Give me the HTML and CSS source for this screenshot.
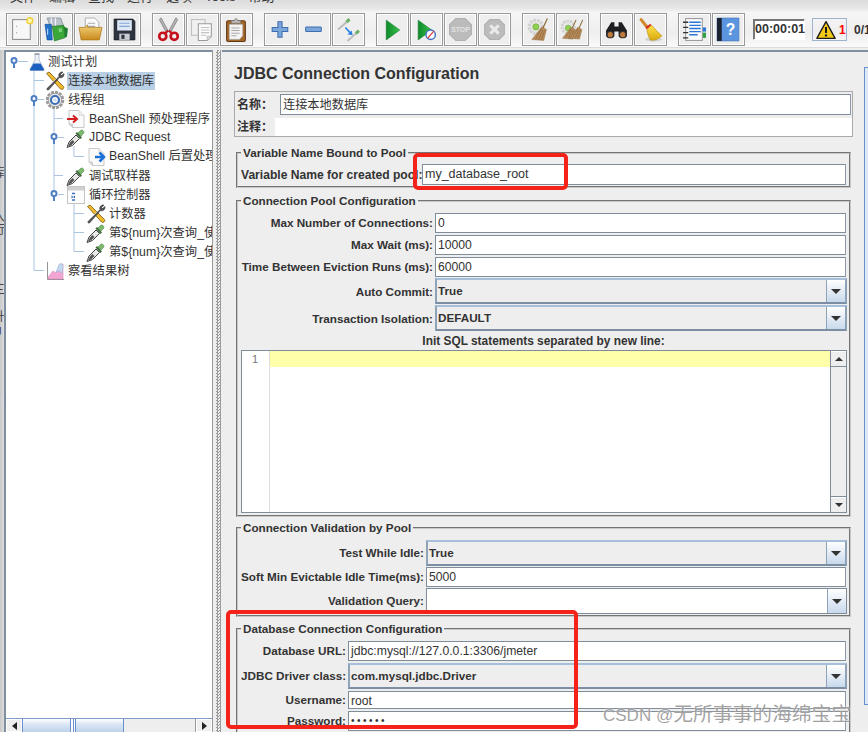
FILE: index.html
```html
<!DOCTYPE html>
<html lang="zh">
<head>
<meta charset="utf-8">
<title>JDBC Connection Configuration</title>
<link rel="stylesheet" href="styles.css">
</head>
<body>
<svg class="defs" aria-hidden="true">
  <defs>
    <linearGradient id="gGreen" x1="0" y1="0" x2="1" y2="0"><stop offset="0" stop-color="#0d8a2a"/><stop offset="1" stop-color="#39c24a"/></linearGradient>
    <linearGradient id="gFolder" x1="0" y1="0" x2="0" y2="1"><stop offset="0" stop-color="#f4d27a"/><stop offset="1" stop-color="#c98a1c"/></linearGradient>
    <linearGradient id="gBroom" x1="0" y1="0" x2="0" y2="1"><stop offset="0" stop-color="#ffe14a"/><stop offset="1" stop-color="#d9a90f"/></linearGradient>

    <symbol id="dropper" viewBox="0 0 20 20">
      <path d="M1 19.500 3 14 10 7 13.500 10.500 6.500 17.500Z" fill="#e8e8e8" stroke="#444" stroke-width="1"/>
      <path d="M2 18.500 4 14.500 6.500 12 8.500 14 5 17.500Z" fill="#555"/>
      <path d="M9.500 5.500 14.500 11 16 9.500 11 4Z" fill="#3f6b3f"/>
      <path d="M12 5 14.500 2.500C16 1 19 3.500 17.500 5.500L15 8Z" fill="#7cb96a" stroke="#4e8a48" stroke-width=".6"/>
    </symbol>
    <symbol id="tools" viewBox="0 0 20 20">
      <path d="M1.500 2.500 4 1 18.500 15.500C19.500 17 17.500 19.500 15.500 18Z" fill="#f0b92e" stroke="#7a5a10" stroke-width=".8"/>
      <path d="M2 17.500 14 5.500C13 3 15 .5 18 1L15.500 3.500 16.500 4.500 19 2.500C19.500 5.500 17 7.500 14.500 6.500L3.500 19C2.500 19.500 1.500 18.500 2 17.500Z" fill="#555" stroke="#222" stroke-width=".5"/>
      <path d="M5 14 12 7" stroke="#ccc" stroke-width=".9"/>
    </symbol>
    <symbol id="gear" viewBox="0 0 20 20">
      <circle cx="10" cy="10" r="7.500" fill="none" stroke="#999" stroke-width="3.500" stroke-dasharray="2.900 1"/>
      <circle cx="10" cy="10" r="6.800" fill="#e4e4e4" stroke="#8a8a8a" stroke-width=".7"/>
      <circle cx="10" cy="10" r="4" fill="#fff" stroke="#3c6fb5" stroke-width="2.200"/>
      <circle cx="10" cy="10" r="1.800" fill="#cfdcee"/>
    </symbol>
    <symbol id="flask" viewBox="0 0 18 18">
      <path d="M7 1h4v6l5 9c.4 1-.2 1.500-1 1.500H3c-.8 0-1.400-.5-1-1.500l5-9Z" fill="#eef2f7" stroke="#9ab" stroke-width=".7"/>
      <path d="M5.500 10.500h7L16 16.500c.2.700-.3 1-1 1H3c-.7 0-1.200-.3-1-1Z" fill="#1d5fc0"/>
      <path d="M6.500 1h5" stroke="#778" stroke-width="1"/>
    </symbol>
    <symbol id="paper" viewBox="0 0 20 20">
      <path d="M3 1.500h10l5 5v12H6.500L3 15Z" fill="#fbfbfb" stroke="#bbb" stroke-width=".8"/>
      <path d="M3 15h3.500v3.500Z" fill="#ddd" stroke="#bbb" stroke-width=".6"/>
      <path d="M13 1.500v5h5" fill="#eee" stroke="#ccc" stroke-width=".6"/>
    </symbol>
    <symbol id="loop" viewBox="0 0 20 20">
      <rect x="1.500" y="1.500" width="17" height="17" fill="#fcfcfc" stroke="#c4c4c4"/>
      <rect x="2" y="2" width="16" height="3.500" fill="#d0d0d0"/>
      <path d="M6 8.500h3M6 15h3" stroke="#3c6fb5" stroke-width="1.300"/>
      <path d="M5.500 10.500l2 1.500-2 1.500ZM9 10.500l-2 1.500 2 1.500Z" fill="#3c6fb5"/>
    </symbol>
    <symbol id="chart" viewBox="0 0 20 20">
      <path d="M2.500 1v17.500H19" fill="none" stroke="#888" stroke-width=".9"/>
      <path d="M3 18V16L8 10l3 2 4-9h3v15Z" fill="#f3a6d3" stroke="#d878b8" stroke-width=".5"/>
      <path d="M11 11.500 14 3.500c2-1.500 4-.5 4 2l-1 7-3-3Z" fill="#c4d8ef" stroke="#8fb0d8" stroke-width=".5"/>
    </symbol>

    <symbol id="i-new" viewBox="0 0 24 24">
      <rect x="2.500" y="2.500" width="17" height="19" fill="#f7f7f7" stroke="#8c8c8c"/>
      <path d="M6 9h.8M6 15h.8" stroke="#999"/>
      <circle cx="19" cy="3.500" r="2.800" fill="#fff6b0" stroke="#f0cf3c" stroke-width="1.400"/>
    </symbol>
    <symbol id="i-books" viewBox="0 0 24 24">
      <path d="M3 1h13l3 8H6Z" fill="#b9c2c9" stroke="#7c8790" stroke-width=".7"/>
      <path d="M7 1v7M11 1v8" stroke="#eef" stroke-width="1.200"/>
      <path d="M1 7h6l1 15H3Z" fill="#1f71c9" stroke="#0e4a90" stroke-width=".6"/>
      <path d="M3.500 11v6" stroke="#bcdcff"/>
      <path d="M8 9l11-1 1 12-10 3Z" fill="#3ba83a" stroke="#1d6f20" stroke-width=".6"/>
      <path d="M19 9l4 2-1 8-2 1Z" fill="#1d7f2d"/>
      <path d="M14 11l3-.3.400 3.500-3 .4Z" fill="#7fd07a"/>
    </symbol>
    <symbol id="i-open" viewBox="0 0 24 24">
      <path d="M7 1h9l4 4v11H7Z" fill="#fafafa" stroke="#999" stroke-width=".7"/>
      <path d="M9.500 6h7M9.500 9h7M9.500 12h7" stroke="#aaa"/>
      <path d="M1 10h6l2-2.500 0 2.500h14l-2.500 12H3Z" fill="url(#gFolder)" stroke="#a87614" stroke-width=".7"/>
    </symbol>
    <symbol id="i-save" viewBox="0 0 24 24">
      <path d="M2 2h18l2 2v18H2Z" fill="#2e3340" stroke="#15171d" stroke-width=".7"/>
      <rect x="5" y="3" width="14" height="10" fill="#dfe9f6"/>
      <path d="M7 6h10M7 9h10" stroke="#7fa7d8"/>
      <rect x="7" y="16" width="10" height="6" fill="#c9ccd1"/>
      <rect x="9" y="17" width="3" height="4" fill="#2e3340"/>
    </symbol>
    <symbol id="i-cut" viewBox="0 0 24 24">
      <path d="M5 1 12 14 10 15 3.500 3C3.200 2 4 1 5 1ZM19 1 12 14 14 15 20.500 3C20.800 2 20 1 19 1Z" fill="#b5b5b5" stroke="#777" stroke-width=".7"/>
      <circle cx="6.500" cy="18.500" r="3.400" fill="none" stroke="#c5121c" stroke-width="2.600"/>
      <circle cx="17.500" cy="18.500" r="3.400" fill="none" stroke="#c5121c" stroke-width="2.600"/>
      <path d="M8.500 16 11.500 13M15.500 16 12.500 13" stroke="#c5121c" stroke-width="2"/>
    </symbol>
    <symbol id="i-copy" viewBox="0 0 24 24">
      <rect x="1.500" y="2.500" width="13" height="15" fill="#f1f1f1" stroke="#bdbdbd"/>
      <path d="M8 6.500h12.500v12l-4 4H8Z" fill="#fbfbfb" stroke="#9a9a9a"/>
      <path d="M10.500 10h8M10.500 12.500h8M10.500 15h8M10.500 17.500h5" stroke="#c3c3c3"/>
      <path d="M16.500 22.500v-4h4" fill="#ddd" stroke="#aaa" stroke-width=".7"/>
    </symbol>
    <symbol id="i-paste" viewBox="0 0 24 24">
      <rect x="2.500" y="3.500" width="18" height="20" rx="1.500" fill="#a5662a" stroke="#5f3a15"/>
      <path d="M5 7h13v11l-3 3.500H5Z" fill="#f4f4f4" stroke="#999" stroke-width=".5"/>
      <path d="M7 10.500h8M7 13h8M7 15.500h8M7 18h5" stroke="#a8a8a8"/>
      <path d="M7 6V3.500h3c0-2.500 3-2.500 3 0h3V6Z" fill="#bdbdbd" stroke="#777" stroke-width=".7"/>
    </symbol>
    <symbol id="i-plus" viewBox="0 0 24 24"><path d="M9.500 4.500h4v5.500h5.500v4H13.500v5.500h-4V14H4v-4h5.500Z" fill="#7aa6dc" stroke="#3d6fb0" stroke-width="1"/></symbol>
    <symbol id="i-minus" viewBox="0 0 24 24"><rect x="3.500" y="9.500" width="15" height="4.500" rx=".8" fill="#7aa6dc" stroke="#3d6fb0"/></symbol>
    <symbol id="i-toggle" viewBox="0 0 24 24">
      <path d="M2 12 10 5" stroke="#bbb" stroke-width="1.800"/><path d="M10 5 13 2" stroke="#6fb06a" stroke-width="3"/>
      <path d="M11 23 19 16" stroke="#bbb" stroke-width="1.800"/><path d="M19 16 22 13" stroke="#6fb06a" stroke-width="3"/>
      <path d="M9 10 13.500 15" stroke="#2a7fe0" stroke-width="1.500"/><path d="M16 17.500 11 16.500 15 13Z" fill="#2a7fe0"/>
    </symbol>
    <symbol id="i-play" viewBox="0 0 24 24"><path d="M6 3 19 12.500 6 22Z" fill="url(#gGreen)" stroke="#0d6d22" stroke-width=".5"/></symbol>
    <symbol id="i-play2" viewBox="0 0 24 24">
      <path d="M4 3 17 12.500 4 22Z" fill="url(#gGreen)" stroke="#0d6d22" stroke-width=".5"/>
      <circle cx="16" cy="17" r="4.500" fill="#fff" stroke="#3f74c8" stroke-width="1.400"/>
      <path d="M13 20.500 19 13.500" stroke="#d93a3a" stroke-width="1.200"/>
    </symbol>
    <symbol id="i-stop" viewBox="0 0 24 24">
      <path d="M7.500 1.500h9l6 6v9l-6 6h-9l-6-6v-9Z" fill="#bcbcbc" stroke="#b0b0b0"/>
      <text x="12" y="14.500" class="stop-text" text-anchor="middle">STOP</text>
    </symbol>
    <symbol id="i-down" viewBox="0 0 24 24">
      <path d="M7.500 2.500h9l5 5v9l-5 5h-9l-5-5v-9Z" fill="#bcbcbc" stroke="#b0b0b0"/>
      <path d="M8 8l8 8M16 8l-8 8" stroke="#e9e9e9" stroke-width="3"/>
    </symbol>
    <symbol id="broomstr" viewBox="0 0 24 24">
      <path d="M20 0 15 11" stroke="#8d6a3c" stroke-width="1.300"/>
      <path d="M14 9 19 12 16 24 3 23Z" fill="#b98d5c" stroke="#8d6a3c" stroke-width=".5"/>
      <path d="M13.500 11 7 23M15 12 10.500 23.500M17 13 13.500 23.500" stroke="#8a6338" stroke-width=".8"/>
    </symbol>
    <symbol id="i-clear" viewBox="0 0 24 24">
      <circle cx="9.500" cy="9.500" r="6.500" fill="#e7e7e7" stroke="#d2d2d2" stroke-width="3" stroke-dasharray="2.500 1"/>
      <circle cx="9.500" cy="9.500" r="3" fill="#8fd050" stroke="#6aa83a" stroke-width=".6"/>
      <use href="#broomstr" x="3" y="0" width="21" height="24"/>
    </symbol>
    <symbol id="i-clearall" viewBox="0 0 26 24">
      <circle cx="8.500" cy="9.500" r="6.500" fill="#e7e7e7" stroke="#d2d2d2" stroke-width="3" stroke-dasharray="2.500 1"/>
      <circle cx="8.500" cy="10.500" r="3" fill="#8fd050" stroke="#6aa83a" stroke-width=".6"/>
      <use href="#broomstr" x="0" y="0" width="20" height="24"/>
      <use href="#broomstr" x="7" y="0" width="20" height="24"/>
    </symbol>
    <symbol id="i-binoc" viewBox="0 0 24 24">
      <path d="M7 5h3v4h4V5h3l5 8v5c0 3-8 3-8 0v-4h-4v4c0 3-8 3-8 0v-5Z" fill="#1e1e22"/>
      <circle cx="6" cy="17" r="3" fill="#c07a3a" stroke="#333"/>
      <circle cx="18" cy="17" r="3" fill="#c07a3a" stroke="#333"/>
    </symbol>
    <symbol id="i-broom" viewBox="0 0 24 24">
      <ellipse cx="15" cy="21.500" rx="8" ry="2" fill="#cfcfcf"/>
      <path d="M3 2.500 9 10" stroke="#d08a2c" stroke-width="3" stroke-linecap="round"/>
      <path d="M7 9.500 12 6.500 13 8 8.500 12Z" fill="#d8322a"/>
      <path d="M8.500 12 13 8C17 12 21 17 23 18 19 22 14 23 12 22 10 19 9 15 8.500 12Z" fill="url(#gBroom)" stroke="#b88c10" stroke-width=".6"/>
    </symbol>
    <symbol id="i-list" viewBox="0 0 24 24">
      <rect x="3.500" y="1.500" width="16" height="21" fill="#fafafa" stroke="#999"/>
      <path d="M1 5h5M1 10h5M1 15h5M1 20h5" stroke="#333" stroke-width="1.300"/>
      <path d="M7 5h11M7 8h11M7 11h11M7 14h11M7 17h8" stroke="#2a75d8" stroke-width="1.300"/>
      <rect x="20" y="10" width="3" height="4" fill="#2a75d8"/><rect x="20" y="15" width="3" height="5" fill="#2f9e44"/>
    </symbol>
    <symbol id="i-help" viewBox="0 0 24 24">
      <path d="M1 1h21v22H1Z" fill="#5c95df" stroke="#3c6fb5" stroke-width=".6"/>
      <rect x="1" y="1" width="4.500" height="22" fill="#1b2230"/>
      <text x="14" y="17" class="help-text" text-anchor="middle">?</text>
    </symbol>
    <symbol id="i-warn" viewBox="0 0 24 24">
      <path d="M12 2 23 22H1Z" fill="#f3c81a" stroke="#1a1a1a" stroke-width="1.600" stroke-linejoin="round"/>
      <path d="M12 8.500v7" stroke="#1a1a1a" stroke-width="2.400"/><circle cx="12" cy="18.500" r="1.400" fill="#1a1a1a"/>
    </symbol>
  </defs>
</svg>

<div class="app">
  <nav class="menu">
    <span class="menu-item">文件</span><span class="menu-item">编辑</span><span class="menu-item">查找</span><span class="menu-item">运行</span><span class="menu-item">选项</span><span class="menu-item">Tools</span><span class="menu-item">帮助</span>
  </nav>

  <div class="toolbar">
    <div class="tool-group">
      <span class="tool"><svg class="ti"><use href="#i-new"/></svg></span>
      <span class="tool"><svg class="ti"><use href="#i-books"/></svg></span>
      <span class="tool"><svg class="ti"><use href="#i-open"/></svg></span>
      <span class="tool"><svg class="ti"><use href="#i-save"/></svg></span>
    </div>
    <div class="tool-group">
      <span class="tool"><svg class="ti"><use href="#i-cut"/></svg></span>
      <span class="tool"><svg class="ti"><use href="#i-copy"/></svg></span>
      <span class="tool"><svg class="ti"><use href="#i-paste"/></svg></span>
    </div>
    <div class="tool-group">
      <span class="tool"><svg class="ti"><use href="#i-plus"/></svg></span>
      <span class="tool"><svg class="ti"><use href="#i-minus"/></svg></span>
      <span class="tool"><svg class="ti"><use href="#i-toggle"/></svg></span>
    </div>
    <div class="tool-group">
      <span class="tool"><svg class="ti"><use href="#i-play"/></svg></span>
      <span class="tool"><svg class="ti"><use href="#i-play2"/></svg></span>
      <span class="tool"><svg class="ti"><use href="#i-stop"/></svg></span>
      <span class="tool"><svg class="ti"><use href="#i-down"/></svg></span>
    </div>
    <div class="tool-group">
      <span class="tool"><svg class="ti"><use href="#i-clear"/></svg></span>
      <span class="tool"><svg class="ti"><use href="#i-clearall"/></svg></span>
    </div>
    <div class="tool-group">
      <span class="tool"><svg class="ti"><use href="#i-binoc"/></svg></span>
      <span class="tool"><svg class="ti"><use href="#i-broom"/></svg></span>
    </div>
    <div class="tool-group">
      <span class="tool"><svg class="ti"><use href="#i-list"/></svg></span>
      <span class="tool"><svg class="ti"><use href="#i-help"/></svg></span>
    </div>
    <div class="status">
      <span class="timer">00:00:01</span>
      <span class="warn"><svg class="warn-icon"><use href="#i-warn"/></svg><b class="warn-count">1</b></span>
      <b class="threads">0/1</b>
    </div>
  </div>

  <div class="workspace">
    <div class="edge">
      <span class="edge-a">库</span><span class="edge-b">入</span><span class="edge-c">行</span><span class="edge-d">三</span><span class="edge-e">升</span><span class="edge-f">U</span><span class="edge-g">n</span><span class="edge-h">T</span><span class="edge-i">T</span>
    </div>

    <aside class="tree-pane">
      <div class="tree">
        <svg class="tree-lines" width="207" height="240" viewBox="6 52 207 240" aria-hidden="true">
          <g class="tl">
            <path d="M18 61.500H28M34 70V270.500H44M34 80.500H44M38 99.500H44M54 108V194M54 118.500H63M58 137.500H64M54 175.500H63M58 194.500H64M74 146V156.500H84M74 203V251.500H84M74 213.500H84M74 232.500H84"/>
          </g>
          <g class="th">
            <circle cx="14" cy="60.500" r="2.500"/><path d="M14 63v5"/>
            <circle cx="34" cy="98.500" r="2.500"/><path d="M34 101v5"/>
            <circle cx="54" cy="136.500" r="2.500"/><path d="M54 139v5"/>
            <circle cx="54" cy="193.500" r="2.500"/><path d="M54 196v5"/>
          </g>
        </svg>
        <div class="row lv0"><svg class="ni ni-flask"><use href="#flask"/></svg><span class="nt">测试计划</span></div>
        <div class="row lv1"><svg class="ni"><use href="#tools"/></svg><span class="nt selected">连接本地数据库</span></div>
        <div class="row lv1"><svg class="ni"><use href="#gear"/></svg><span class="nt">线程组</span></div>
        <div class="row lv2"><svg class="ni"><use href="#paper"/><path class="arrow-red" d="M1 10h9M7 6.500 11 10 7 13.500"/></svg><span class="nt">BeanShell 预处理程序</span></div>
        <div class="row lv2"><svg class="ni"><use href="#dropper"/></svg><span class="nt latin-row">JDBC Request</span></div>
        <div class="row lv3"><svg class="ni"><use href="#paper"/><path class="arrow-blue" d="M9 10h8M13.500 5.500 18 10 13.500 14.500"/></svg><span class="nt latin-row">BeanShell 后置处理程序</span></div>
        <div class="row lv2"><svg class="ni"><use href="#dropper"/></svg><span class="nt">调试取样器</span></div>
        <div class="row lv2"><svg class="ni"><use href="#loop"/></svg><span class="nt">循环控制器</span></div>
        <div class="row lv3"><svg class="ni"><use href="#tools"/></svg><span class="nt">计数器</span></div>
        <div class="row lv3"><svg class="ni"><use href="#dropper"/></svg><span class="nt">第${num}次查询_使用变量</span></div>
        <div class="row lv3"><svg class="ni"><use href="#dropper"/></svg><span class="nt">第${num}次查询_使用变量</span></div>
        <div class="row lv1"><svg class="ni"><use href="#chart"/></svg><span class="nt">察看结果树</span></div>
      </div>
      <div class="hscroll">
        <span class="sbtn"><i class="tri tri-left"></i></span>
        <span class="hthumb"><i class="grip"></i></span>
        <span class="htrack"></span>
        <span class="sbtn"><i class="tri tri-right"></i></span>
      </div>
    </aside>

    <div class="divider"></div>

    <main class="panel">
      <h1 class="title">JDBC Connection Configuration</h1>

      <div class="namebox">
        <div class="name-row">
          <label class="name-label">名称：</label>
          <div class="field name-field">连接本地数据库</div>
        </div>
        <div class="comment-row">
          <label class="name-label">注释：</label>
          <div class="comment-field"></div>
        </div>
      </div>

      <fieldset class="group g1">
        <legend>Variable Name Bound to Pool</legend>
        <div class="form form-1">
          <label>Variable Name for created pool:</label><div class="field field-wide">my_database_root</div>
        </div>
      </fieldset>

      <fieldset class="group g2">
        <legend>Connection Pool Configuration</legend>
        <div class="form form-2">
          <label>Max Number of Connections:</label><div class="field">0</div>
          <label>Max Wait (ms):</label><div class="field">10000</div>
          <label>Time Between Eviction Runs (ms):</label><div class="field">60000</div>
          <label>Auto Commit:</label><div class="combo"><span class="combo-val">True</span><span class="combo-btn"><i class="tri tri-down"></i></span></div>
          <label>Transaction Isolation:</label><div class="combo"><span class="combo-val">DEFAULT</span><span class="combo-btn"><i class="tri tri-down"></i></span></div>
        </div>
        <div class="init-label">Init SQL statements separated by new line:</div>
        <div class="editor">
          <div class="gutter">1</div>
          <div class="code"><div class="current-line"></div></div>
          <div class="vscroll">
            <span class="sbtn-v"><i class="tri tri-up"></i></span>
            <span class="vtrack"></span>
            <span class="sbtn-v"><i class="tri tri-down-s"></i></span>
          </div>
        </div>
      </fieldset>

      <fieldset class="group g3">
        <legend>Connection Validation by Pool</legend>
        <div class="form form-3">
          <label>Test While Idle:</label><div class="combo"><span class="combo-val">True</span><span class="combo-btn"><i class="tri tri-down"></i></span></div>
          <label>Soft Min Evictable Idle Time(ms):</label><div class="field">5000</div>
          <label>Validation Query:</label><div class="combo combo-edit"><span class="combo-val"></span><span class="combo-btn"><i class="tri tri-down"></i></span></div>
        </div>
      </fieldset>

      <fieldset class="group g4">
        <legend>Database Connection Configuration</legend>
        <div class="form form-4">
          <label>Database URL:</label><div class="field">jdbc:mysql://127.0.0.1:3306/jmeter</div>
          <label>JDBC Driver class:</label><div class="combo"><span class="combo-val">com.mysql.jdbc.Driver</span><span class="combo-btn"><i class="tri tri-down"></i></span></div>
          <label>Username:</label><div class="field">root</div>
          <label>Password:</label><div class="field pass">••••••</div>
        </div>
      </fieldset>
    </main>

    <div class="page-scroll"><div class="page-thumb"></div></div>
  </div>

  <div class="mark mark-a"></div>
  <div class="mark mark-b"></div>
  <div class="watermark"><span class="wm-latin">CSDN @</span>无所事事的海绵宝宝</div>
</div>
</body>
</html>
```

FILE: styles.css
```css
* { box-sizing: border-box; }
html, body { margin: 0; padding: 0; height: 100%; overflow: hidden; }
body { background: #eee; color: #333; font: 12px "Liberation Sans", "Noto Sans CJK SC", sans-serif; }
.defs { position: absolute; width: 0; height: 0; }
.app { position: relative; width: 868px; height: 732px; overflow: hidden; display: flex; flex-direction: column; }

/* menu, cut off by the top of the shot */
.menu { flex: none; height: 12px; overflow: hidden; display: flex; align-items: flex-end; gap: 13px; padding-left: 10px; background: linear-gradient(#dcdcdc 0, #e6e6e6 8px, #f4f4f4 12px); }
.menu-item { font-size: 13px; line-height: 15px; margin-bottom: 8px; }

/* toolbar */
.toolbar { flex: none; height: 36px; display: flex; padding: 1px 0 0 6px; background: linear-gradient(#f6f6f6, #eee 60%, #fafafa); border-bottom: 1px solid #ddd; }
.tool-group { display: flex; gap: 1px; margin-right: 11px; }
.tool { width: 33px; height: 33px; display: flex; align-items: center; justify-content: center; background: #eee; border: 1px solid #999; box-shadow: inset 0 0 0 1px #fff; }
.ti { width: 25px; height: 25px; }
.stop-text { font: bold 6.5px "Liberation Sans", sans-serif; fill: #e4e4e4; }
.help-text { font: bold 15px "Liberation Sans", sans-serif; fill: #fff; }
.status { display: flex; align-items: center; height: 33px; margin-left: -3px; }
.timer { width: 52px; height: 21px; background: #fff; border: 1px solid; border-color: #777 #fff #fff #777; box-shadow: inset 1px 1px 0 #777; font: bold 12.500px/19px "Liberation Sans", sans-serif; color: #333; padding-left: 1px; white-space: nowrap; }
.warn { width: 35px; height: 23px; margin-left: 7px; display: flex; align-items: center; border: 1px solid #9fb3cc; padding-left: 2px; gap: 2px; }
.warn-icon { width: 22px; height: 20px; }
.warn-count { color: #f00; font-size: 12px; }
.threads { margin-left: 7px; font-size: 12px; white-space: nowrap; }

/* work area */
.workspace { flex: 1; min-height: 0; display: flex; margin-top: 2px; }
.edge { flex: none; width: 4px; background: linear-gradient(90deg, #c9c9c9, #dcdcdc); overflow: hidden; display: flex; flex-direction: column; font-size: 12px; line-height: 12px; color: #444; }
.edge span { margin-left: -7px; display: block; }
.edge-a { margin-top: 117px; }
.edge-b { margin-top: 32px; }
.edge-c { margin-top: 1px; }
.edge-d { margin-top: 48px; }
.edge-e { margin-top: 15px; }
.edge-f { margin-top: 3px; color: #446; }
.edge-g { margin-top: 2px; }
.edge-h { margin-top: 39px; color: #89a; }
.edge-i { margin-top: 1px; color: #89a; }

/* tree */
.tree-pane { flex: none; width: 209px; display: flex; flex-direction: column; border-top: 2px solid #7f8fa0; border-left: 2px solid #7f8fa0; border-right: 1px solid #999; background: #fff; }
.tree { flex: 1; min-height: 0; position: relative; overflow: hidden; }
.tree-lines { position: absolute; left: 0; top: 0; }
.tl path { fill: none; stroke: #a9c3e0; stroke-width: 1; }
.th circle { fill: #fff; stroke: #4f7fc4; stroke-width: 2; }
.th path { fill: none; stroke: #4f7fc4; stroke-width: 2; }
.row { position: relative; height: 19px; display: flex; align-items: center; gap: 2px; white-space: nowrap; font: 12.300px/18px "Liberation Sans", "Noto Sans CJK SC", sans-serif; color: #333; }
.lv0 { padding-left: 22px; gap: 1px; }
.lv1 { padding-left: 39px; }
.lv2 { padding-left: 60px; }
.lv3 { padding-left: 80px; }
.ni { flex: none; width: 20px; height: 20px; }
.ni-flask { width: 18px; height: 18px; }
.nt { padding: 0 1px; }
.latin-row { margin-top: -2px; }
.selected { background: #b8cfe5; }
.arrow-red { fill: none; stroke: #d02020; stroke-width: 2; }
.arrow-blue { fill: none; stroke: #1a6fd8; stroke-width: 2.500; }

.hscroll { flex: none; height: 14px; display: flex; border-top: 1px solid #7f9cc8; background: #eee; }
.sbtn { flex: none; width: 16px; display: flex; align-items: center; justify-content: center; border: 1px solid #fff; background: #eee; }
.hthumb { flex: none; width: 102px; display: flex; align-items: center; justify-content: center; background: linear-gradient(#fff, #dbe7f5 40%, #bed2ea); border: 1px solid #6a8fd0; border-top: 0; border-bottom: 0; }
.grip { display: block; width: 6px; height: 100%; border-left: 1px solid #6a8fd0; border-right: 1px solid #6a8fd0; background: linear-gradient(90deg, #fff 50%, #6a8fd0 50%, #6a8fd0 66%, #fff 66%); }
.htrack { flex: 1; background: #eee; border-right: 1px solid #999; }
.tri { display: block; width: 0; height: 0; border-style: solid; border-color: transparent; }
.tri-left { border-width: 4px 5px 4px 0; border-right-color: #222; }
.tri-right { border-width: 4px 0 4px 5px; border-left-color: #222; }
.tri-down { border-width: 5px 5px 0; border-top-color: #333; }
.tri-up { border-width: 0 4px 4px; border-bottom-color: #333; }
.tri-down-s { border-width: 4px 4px 0; border-top-color: #333; }

.divider { flex: none; width: 9px; background-color: #eee; background-image: repeating-conic-gradient(#9a9a9a 0 25%, #eee 0 50%); background-size: 3px 3px; background-clip: content-box; padding: 0 1px 0 3px; }

/* right panel */
.panel { flex: none; width: 642px; overflow: hidden; border-top: 2px solid #7f8fa0; padding-left: 12px; background: #eee; }
.title { margin: 12px 0 7px; height: 20px; font: bold 16px/20px "Liberation Sans", sans-serif; color: #333; }
.namebox { width: 619px; height: 46px; border: 1px solid #aaa; }
.name-row { display: flex; height: 23px; align-items: flex-end; }
.name-label { font: bold 12px "Noto Sans CJK SC", sans-serif; color: #333; padding-left: 2px; white-space: nowrap; }
.name-row .name-label { width: 45px; align-self: center; }
.comment-row .name-label { width: 40px; }
.name-field { flex: 1; height: 21px; margin-right: 1px; font-family: "Noto Sans CJK SC", sans-serif; }
.comment-row { display: flex; height: 21px; align-items: center; }
.comment-field { flex: 1; height: 18px; background: #fff; margin-top: 3px; }
.field { background: #fff; border: 1px solid #7f8c9a; border-right-color: #8d99a6; padding-left: 2px; font-size: 12.200px; line-height: 18px; color: #333; white-space: nowrap; overflow: hidden; }
.field-wide { font-size: 12.500px; line-height: 19px; }
.pass { font-size: 10px; letter-spacing: 2.500px; }

.group { margin: 0 2px; padding: 0 3px 1px; min-width: 0; width: 615px; border: 2px groove #c8c8c8; }
.group legend { padding: 0 2px; margin-left: 0; font: bold 11.700px/14px "Liberation Sans", sans-serif; color: #333; }
.g1 { margin-top: 9px; }
.g2 { margin-top: 6px; padding-bottom: 2px; }
.g3 { margin-top: 4px; padding-bottom: 1px; }
.g4 { margin-top: 5px; height: 120px; }
.form { display: grid; align-items: center; column-gap: 2px; padding-top: 5px; }
.form label { font: bold 11.700px/14px "Liberation Sans", sans-serif; color: #333; text-align: right; white-space: nowrap; }
.form-1 { grid-template-columns: 179px 1fr; grid-template-rows: 21px; padding-top: 4px; }
.form-1 label { font-size: 12.100px; }
.form-2 { grid-template-columns: 192px 1fr; grid-template-rows: 20px 20px 20px 25px 25px; row-gap: 2px; }
.form-2 .combo { margin-top: -1px; }
.form-3 { grid-template-columns: 183px 1fr; grid-template-rows: 26px 20px 26px; row-gap: 1px; }
.form-4 { grid-template-columns: 105px 1fr; grid-template-rows: 20px 26px 18px 20px; row-gap: 2px; }
.form > .field, .form > .combo { height: 100%; }
.form-2 > .combo { height: calc(100% + 1px); }
.combo { display: flex; margin-right: -1px; border: 2px solid #8ea2b8; border-bottom-color: #7b8ea3; border-top-color: #a6c0dc; background: #eee; }
.combo-val { flex: 1; padding-left: 1px; font: bold 11.700px/22px "Liberation Sans", sans-serif; color: #333; white-space: nowrap; }
.combo-edit { background: #fff; border-width: 1px; border-color: #7f8c9a; }
.combo-btn { flex: none; width: 19px; display: flex; align-items: center; justify-content: center; border-left: 1px solid #8ea2b8; background: linear-gradient(#fff, #c8d9ec); }

.init-label { height: 19px; font: bold 11.900px/20px "Liberation Sans", sans-serif; color: #333; text-align: center; }
.editor { display: flex; height: 163px; border: 1px solid #7f8c9a; background: #fff; margin-right: -1px; }
.gutter { flex: none; width: 28px; border-right: 1px solid #ddd; font: 11px/16px "Liberation Sans", sans-serif; color: #777; padding-left: 10px; }
.code { flex: 1; }
.current-line { height: 16px; background: #ffffaa; }
.vscroll { flex: none; width: 16px; display: flex; flex-direction: column; border-left: 1px solid #7f8c9a; background: #eee; }
.sbtn-v { flex: none; height: 16px; display: flex; align-items: center; justify-content: center; background: #eee; border-bottom: 1px solid #7f8c9a; box-shadow: inset 0 1px 0 #fff; }
.sbtn-v:last-child { border-top: 1px solid #7f8c9a; border-bottom: 0; }
.vtrack { flex: 1; }

.page-scroll { flex: none; width: 4px; padding-top: 15px; padding-bottom: 27px; border-top: 2px solid #7f8fa0; background: #eee; }
.page-thumb { height: 100%; border-left: 1px solid #6a8fd0; border-top: 1px solid #6a8fd0; border-bottom: 1px solid #6a8fd0; background: #dce8f8; }

/* annotations over the shot */
.mark { position: absolute; border: 4px solid #f5221a; border-radius: 5px; pointer-events: none; }
.mark-a { left: 413px; top: 153px; width: 155px; height: 37px; }
.mark-b { left: 226px; top: 610px; width: 352px; height: 119px; }
.watermark { position: absolute; left: 603px; top: 700px; white-space: nowrap; font: 19.800px/26px "Noto Sans CJK SC", sans-serif; color: rgba(120, 120, 120, .7); text-shadow: 0 0 2px #fff; }
.wm-latin { font: 17px/26px "Liberation Sans", sans-serif; }
```
